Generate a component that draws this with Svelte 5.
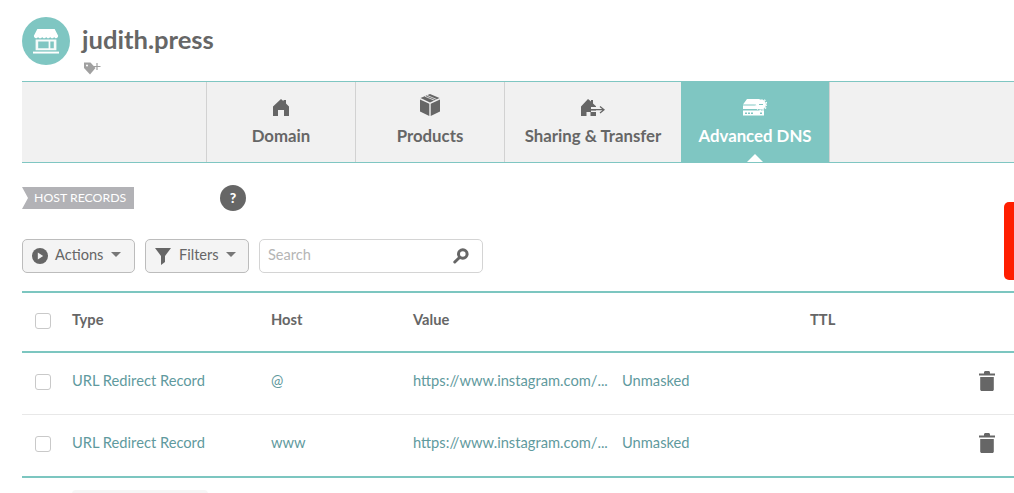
<script>
  const tabs = [
    { label: 'Domain', icon: 'home' },
    { label: 'Products', icon: 'box' },
    { label: 'Sharing & Transfer', icon: 'share' },
    { label: 'Advanced DNS', icon: 'dns', active: true }
  ]

  const records = [
    { type: 'URL Redirect Record', host: '@', value: 'https://www.instagram.com/...', mask: 'Unmasked' },
    { type: 'URL Redirect Record', host: 'www', value: 'https://www.instagram.com/...', mask: 'Unmasked' }
  ]
</script>

<div class="page">
  <header class="head">
    <div class="avatar">
      <svg width="26" height="25" viewBox="0 0 30 26" preserveAspectRatio="none">
        <path d="M5 0h20l4 7c0 1.500-1.200 2.500-2.300 2.500-1 0-1.800-.5-2.300-1.300-.5.8-1.400 1.300-2.300 1.300s-1.800-.5-2.300-1.300c-.5.8-1.400 1.300-2.300 1.300s-1.800-.5-2.300-1.300c-.5.8-1.400 1.300-2.300 1.300s-1.800-.5-2.300-1.300c-.5.8-1.400 1.300-2.300 1.300S6.300 9 5.800 8.200C5.300 9 4.400 9.500 3.400 9.500 2.200 9.500 1 8.500 1 7z" fill="#fff"/>
        <path fill-rule="evenodd" d="M3 11h24v11H3zM6 13v7h12v-7zM20 13v7h4v-7z" fill="#fff" opacity=".92"/>
        <rect y="23.500" width="30" height="2" fill="#fff"/>
      </svg>
    </div>
    <div class="title">
      <h1>judith.press</h1>
      <svg class="tag" width="17" height="13" viewBox="0 0 17 13">
        <path d="M0 .5h6.500l5 5.500-5.500 6.500L0 6z" fill="#a0a0a0"/>
        <circle cx="3" cy="3.500" r="1" fill="#fff"/>
        <path d="M13 1v7M9.500 4.500h7" stroke="#a0a0a0" stroke-width="1.200"/>
      </svg>
    </div>
  </header>

  <nav class="tabs">
    <div class="spacer"></div>
    {#each tabs as tab}
      <div class="tab" class:active={tab.active}>
        <span class="ic">
          {#if tab.icon === 'home'}
            <svg width="16" height="17" viewBox="0 0 16 17"><path d="M8 0l2.500 2.200V1h2.500v3.500L16 7.500V17h-5v-6H5v6H0V7.500z" fill="#666"/></svg>
          {:else if tab.icon === 'box'}
            <svg width="22" height="22" viewBox="0 0 22 22">
              <path d="M11 0l9.500 4L11 8.500 1.500 4z" fill="#666"/>
              <path d="M1 5.500l9.300 4.200V22L1 17.500zM21 5.500l-9.300 4.200V22l9.300-4.500z" fill="#666"/>
              <path d="M6 2.300l9.500 4M8 1.400l9.500 4" stroke="#f1f1f1" stroke-width=".8"/>
            </svg>
          {:else if tab.icon === 'share'}
            <svg width="24" height="17" viewBox="0 0 24 17">
              <path d="M7 0l3 2.500V1h2v3.500l3 2.800V8h-5v2h5v1.500h-5V13h5v4H9.500v-4h-4v4H0V7.500z" fill="#666"/>
              <path d="M10 10.700h12M19 7.500l4 3.200-4 3.200" fill="none" stroke="#666" stroke-width="1.300"/>
            </svg>
          {:else}
            <svg width="24" height="17" viewBox="0 0 24 17">
              <path d="M4 0h12v2.500l1 3H0z" fill="#fff"/>
              <rect y="6.500" width="16" height="3.500" fill="#fff"/>
              <rect y="11.500" width="21" height="5" fill="#fff"/>
              <path d="M2 13.500h2v1.500H2zM5 13.500h2v1.500H5zM8 13.500h2v1.500H8zM17 13.500h2v1.500h-2z" fill="#7fc6c2"/>
              <circle cx="18" cy="5.500" r="5" fill="#fff"/>
              <circle cx="18" cy="5.500" r="5.800" fill="none" stroke="#fff" stroke-width="1.200" stroke-dasharray="1.500 1.500"/>
              <path d="M16 5.500h4" stroke="#7fc6c2" stroke-width="1"/>
            </svg>
          {/if}
        </span>
        <span class="label">{tab.label}</span>
      </div>
    {/each}
    <div class="rest"></div>
  </nav>

  <div class="section">
    <span class="ribbon">HOST RECORDS</span>
    <span class="help">?</span>
  </div>

  <div class="toolbar">
    <button class="btn actions">
      <svg width="16" height="16" viewBox="0 0 16 16"><circle cx="8" cy="8" r="8" fill="#666"/><path d="M5.800 4.500l5.400 3.500-5.400 3.500z" fill="#f2f2f2"/></svg>
      <span>Actions</span>
      <i class="caret"></i>
    </button>
    <button class="btn filters">
      <svg width="16" height="17" viewBox="0 0 16 17"><path d="M0 0h16L10 8v6l-4 3V8z" fill="#666"/></svg>
      <span>Filters</span>
      <i class="caret"></i>
    </button>
    <div class="search">
      <span>Search</span>
      <svg width="16" height="16" viewBox="0 0 16 16">
        <circle cx="9.800" cy="6" r="4.300" fill="none" stroke="#666" stroke-width="3"/>
        <path d="M6.500 9.500L1.800 14" stroke="#666" stroke-width="3" stroke-linecap="round"/>
      </svg>
    </div>
  </div>

  <div class="table">
    <div class="row th">
      <span class="check"></span>
      <span class="c-type">Type</span>
      <span class="c-host">Host</span>
      <span class="c-value">Value</span>
      <span class="c-ttl">TTL</span>
    </div>
    {#each records as r, i}
      <div class="row" class:last={i === records.length - 1}>
        <span class="check"></span>
        <span class="c-type">{r.type}</span>
        <span class="c-host">{r.host}</span>
        <span class="c-value">{r.value}</span>
        <span class="c-mask">{r.mask}</span>
        <svg class="trash" width="16" height="20" viewBox="0 0 16 20">
          <path d="M5 1.500C5 .6 5.600 0 6.500 0h3c.9 0 1.500.6 1.500 1.500V2.500h5v2H0v-2h5z" fill="#666"/>
          <path d="M1.200 6h13.600v12.500c0 .9-.6 1.500-1.500 1.500H2.700c-.9 0-1.500-.6-1.500-1.500z" fill="#666"/>
        </svg>
      </div>
    {/each}
  </div>

  <div class="more"></div>
  <div class="red"></div>
</div>

<style>
  :global(body) {
    margin: 0;
    background: #fff;
    overflow: hidden;
  }
  .page {
    position: relative;
    height: 493px;
    overflow: hidden;
    padding-left: 22px;
    font-family: Lato, "Open Sans", sans-serif;
    color: #666;
    box-sizing: border-box;
  }
  .head {
    display: flex;
    gap: 12px;
    height: 81px;
    padding-top: 17px;
    box-sizing: border-box;
  }
  .avatar {
    width: 48px;
    height: 48px;
    border-radius: 50%;
    background: #7fc6c2;
    display: flex;
    align-items: center;
    justify-content: center;
  }
  h1 {
    margin: 0;
    font-size: 25.6px;
    line-height: 30px;
    margin-top: 7px;
    font-weight: 700;
    color: #666;
  }
  .tag {
    display: block;
    margin: 8px 0 0 2px;
  }
  .tabs {
    display: flex;
    height: 82px;
    border-top: 1px solid #7fc6c2;
    border-bottom: 1px solid #7fc6c2;
    background: #f1f1f1;
    box-sizing: border-box;
  }
  .spacer {
    width: 184px;
  }
  .tab {
    position: relative;
    border-left: 1px solid #d2d2d2;
    width: 149px;
    display: flex;
    flex-direction: column;
    align-items: center;
    box-sizing: border-box;
  }
  .tab:nth-child(4) {
    width: 177px;
  }
  .tab.active {
    width: 149px;
    background: #7fc6c2;
    color: #fff;
    border-left: 0;
    border-right: 1px solid #d2d2d2;
  }
  .tab.active::after {
    content: "";
    position: absolute;
    left: 50%;
    bottom: 0;
    margin-left: -8px;
    border: 8px solid transparent;
    border-top: 0;
    border-bottom-color: #fff;
  }
  .ic {
    height: 37px;
    display: flex;
    align-items: flex-end;
    padding-bottom: 3px;
    box-sizing: border-box;
  }
  .label {
    font-size: 16.8px;
    font-weight: 700;
    line-height: 22px;
    margin-top: 6px;
  }
  .rest {
    flex: 1;
  }
  .section {
    display: flex;
    align-items: center;
    height: 26px;
    margin-top: 22px;
  }
  .ribbon {
    width: 112px;
    height: 22px;
    background: #b2b2b6;
    color: #fff;
    font-size: 12.3px;
    line-height: 21px;
    padding-left: 12px;
    box-sizing: border-box;
    clip-path: polygon(0 0, 100% 0, 100% 100%, 0 100%, 6px 50%);
  }
  .help {
    margin-left: 86px;
    width: 26px;
    height: 26px;
    border-radius: 50%;
    background: #666;
    color: #fff;
    font-size: 14px;
    font-weight: 900;
    text-align: center;
    line-height: 26px;
  }
  .toolbar {
    display: flex;
    gap: 10px;
    margin-top: 28px;
    height: 34px;
  }
  .btn {
    display: flex;
    align-items: center;
    height: 34px;
    padding: 0 0 0 9px;
    border: 1px solid #bcbcbc;
    border-radius: 5px;
    background: #f4f4f4;
    font: inherit;
    font-size: 14.6px;
    color: #666;
    box-sizing: border-box;
  }
  .btn span,
  .search span {
    margin-bottom: 3px;
  }
  .actions {
    width: 113px;
    gap: 7px;
  }
  .filters {
    width: 104px;
    gap: 8px;
  }
  .caret {
    margin: 0 0 3px 1px;
    border: 5px solid transparent;
    border-top: 5px solid #777;
    border-bottom: 0;
  }
  .filters .caret {
    margin-left: -1px;
  }
  .search {
    display: flex;
    align-items: center;
    justify-content: space-between;
    width: 224px;
    height: 34px;
    padding: 0 13px 0 8px;
    border: 1px solid #d4d4d4;
    border-radius: 5px;
    font-size: 14.6px;
    color: #b5b5b5;
    box-sizing: border-box;
  }
  .table {
    margin-top: 18px;
    border-top: 2px solid #7cc6c0;
  }
  .row {
    display: flex;
    align-items: center;
    height: 62px;
    padding-bottom: 3px;
    border-bottom: 1px solid #e8e8e8;
    font-size: 14.7px;
    color: #5f9a9e;
    box-sizing: border-box;
  }
  .row > span:not(.check) {
    margin-bottom: 5px;
  }
  .row.th {
    height: 60px;
    border-bottom: 2px solid #7cc6c0;
    color: #666;
    font-weight: 700;
  }
  .row.th > span:not(.check) {
    margin-bottom: 3px;
  }
  .row.last {
    height: 63px;
    border-bottom: 2px solid #7cc6c0;
  }
  .check {
    width: 16px;
    height: 16px;
    margin-left: 13px;
    border: 1px solid #c9c9c9;
    border-radius: 3px;
    box-sizing: border-box;
  }
  .c-type {
    margin-left: 21px;
    width: 199px;
  }
  .c-host {
    width: 142px;
  }
  .c-value {
    width: 209px;
  }
  .c-ttl {
    margin-left: 188px;
  }
  .trash {
    margin: 0 19px 3px auto;
  }
  .more {
    width: 136px;
    height: 12px;
    margin: 12px 0 0 50px;
    background: #f6f6f6;
    border-radius: 4px;
  }
  .red {
    position: absolute;
    right: 0;
    top: 202px;
    width: 10px;
    height: 78px;
    background: #ff1e00;
    border-radius: 5px 0 0 5px;
  }
</style>
